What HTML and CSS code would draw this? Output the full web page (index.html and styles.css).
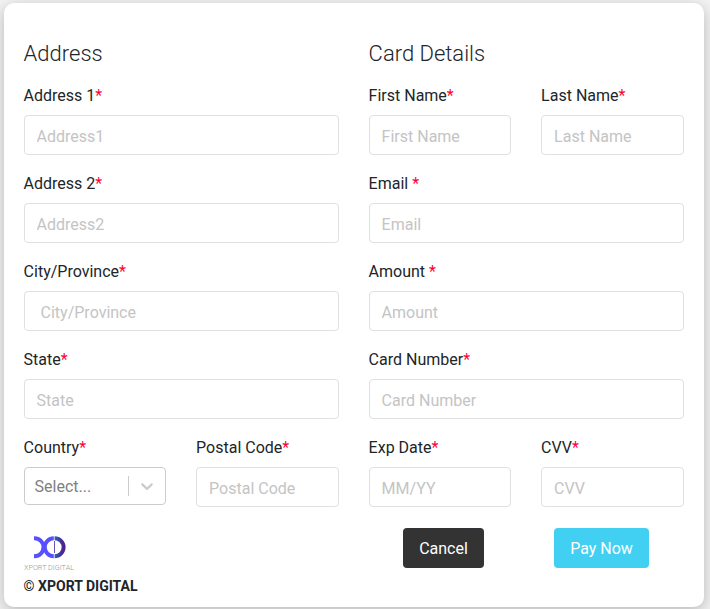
FILE: index.html
```html
<!DOCTYPE html>
<html lang="en">
<head>
<meta charset="utf-8">
<title>Payment</title>
<link rel="stylesheet" href="styles.css">
</head>
<body>
<form class="card">
  <div class="columns">
    <section class="column">
      <h2>Address</h2>
      <div class="field"><label for="a1">Address 1<span class="req">*</span></label><input id="a1" placeholder="Address1"></div>
      <div class="field"><label for="a2">Address 2<span class="req">*</span></label><input id="a2" placeholder="Address2"></div>
      <div class="field"><label for="city">City/Province<span class="req">*</span></label><input id="city" placeholder=" City/Province"></div>
      <div class="field"><label for="state">State<span class="req">*</span></label><input id="state" placeholder="State"></div>
      <div class="pair">
        <div class="field"><label>Country<span class="req">*</span></label>
          <div class="select"><span class="select-text">Select...</span><span class="separator"></span>
            <svg class="chevron" width="20" height="20" viewBox="0 0 20 20"><path d="M4.516 7.548c0.436-0.446 1.043-0.481 1.576 0l3.908 3.747 3.908-3.747c0.533-0.481 1.141-0.446 1.574 0 0.436 0.445 0.408 1.197 0 1.615-0.406 0.418-4.695 4.502-4.695 4.502-0.217 0.223-0.502 0.335-0.787 0.335s-0.57-0.112-0.789-0.335c0 0-4.287-4.084-4.695-4.502s-0.436-1.17 0-1.615z"/></svg>
          </div>
        </div>
        <div class="field"><label for="zip">Postal Code<span class="req">*</span></label><input id="zip" placeholder="Postal Code"></div>
      </div>
    </section>
    <section class="column">
      <h2>Card Details</h2>
      <div class="pair">
        <div class="field"><label for="fn">First Name<span class="req">*</span></label><input id="fn" placeholder="First Name"></div>
        <div class="field"><label for="ln">Last Name<span class="req">*</span></label><input id="ln" placeholder="Last Name"></div>
      </div>
      <div class="field"><label for="em">Email <span class="req">*</span></label><input id="em" placeholder="Email"></div>
      <div class="field"><label for="am">Amount <span class="req">*</span></label><input id="am" placeholder="Amount"></div>
      <div class="field"><label for="cn">Card Number<span class="req">*</span></label><input id="cn" placeholder="Card Number"></div>
      <div class="pair">
        <div class="field"><label for="ex">Exp Date<span class="req">*</span></label><input id="ex" placeholder="MM/YY"></div>
        <div class="field"><label for="cvv">CVV<span class="req">*</span></label><input id="cvv" placeholder="CVV"></div>
      </div>
    </section>
  </div>
  <footer class="footer">
    <div class="brand">
      <svg class="logo" width="50" height="44" viewBox="0 0 50 44">
        <defs><linearGradient id="d" x1="0" x2="1"><stop offset="0" stop-color="#2b62b8"/><stop offset="1" stop-color="#50208f"/></linearGradient></defs>
        <g fill="none" stroke-width="4">
          <path d="M10 10.200H10.500A9 9 0 0 1 10.500 28.200H10" stroke="#5750ff"/>
          <path d="M29.800 10.200A9 9 0 0 0 29.800 28.200" stroke="#5750ff"/>
          <path d="M30.600 10.200A9 9 0 0 1 30.600 28.200" stroke="url(#d)"/>
          <path d="M30.500 13V25" stroke="#6755b8" stroke-width="1"/>
        </g>
        <text x="0" y="42" textLength="50" lengthAdjust="spacingAndGlyphs">XPORT DIGITAL</text>
      </svg>
      <strong>© XPORT DIGITAL</strong>
    </div>
    <div class="actions">
      <button type="button" class="btn cancel">Cancel</button>
      <button type="button" class="btn pay">Pay Now</button>
    </div>
  </footer>
</form>
</body>
</html>
```
FILE: styles.css
```css
* { box-sizing: border-box; }
body {
  margin: 0;
  height: 609px;
  overflow: hidden;
  padding: 3px 6px 2px 3.6px;
  background: #f3f3f3;
  color: #212529;
  font: 16px/24px Roboto, sans-serif;
}
.card {
  width: 700px;
  height: 604px;
  padding: 36px 20px 0;
  border-radius: 10px;
  background: #fff;
  box-shadow: 0 4px 15px rgba(0, 0, 0, .25);
}
.columns { display: grid; grid-template-columns: 1fr 1fr; gap: 30px; }
h2 { margin: 0 0 16px; font-size: 22px; line-height: 29px; font-weight: 300; }
.field { margin-bottom: 16px; padding-bottom: 1px; min-width: 0; }
.pair { display: grid; grid-template-columns: 1fr 1fr; gap: 30px; }
label { display: block; margin-bottom: 7px; }
.req { color: #ff0037; }
input {
  display: block;
  width: 100%;
  height: 40px;
  padding: 3px 12px 0;
  border: 1px solid #e0e0e0;
  border-radius: 4px;
  background: #fff;
  color: #212529;
  font: inherit;
}
input::placeholder { color: #c4c4c4; opacity: 1; }
.select {
  display: flex;
  align-items: center;
  height: 38px;
  border: 1px solid #ccc;
  border-radius: 4px;
  color: gray;
}
.select-text { flex: 1; padding: 2px 0 0 10px; }
.separator { width: 1px; height: 20px; background: #ccc; }
.chevron { margin: 0 8px; fill: #ccc; }
.footer { display: grid; grid-template-columns: 1fr 1fr; gap: 30px; padding-top: 4px; }
.brand { display: flex; flex-direction: column; font-size: 14px; line-height: 24px; }
.brand strong { font-weight: 700; margin-top: 2px; }
.logo text { font: 300 7px Roboto, sans-serif; fill: #999; }
.actions { display: flex; gap: 70px; padding-left: 34.4px; }
.btn {
  height: 40px;
  border: 0;
  border-radius: 4px;
  padding: 1px 0 0;
  color: #fff;
  font: inherit;
}
.cancel { width: 81px; background: #333; }
.pay { width: 95px; background: #41d0f2; }
```
